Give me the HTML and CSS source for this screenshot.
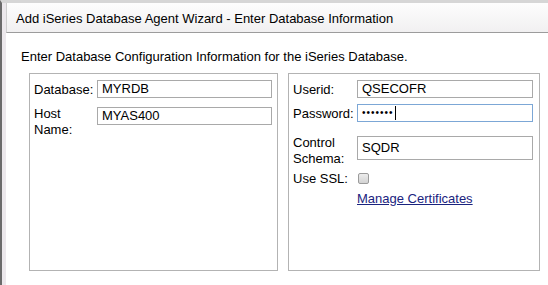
FILE: index.html
```html
<!DOCTYPE html>
<html>
<head>
<meta charset="utf-8">
<title>Add iSeries Database Agent Wizard</title>
<link rel="stylesheet" href="styles.css">
</head>
<body>
<div class="window">
  <div class="titlebar">Add iSeries Database Agent Wizard - Enter Database Information</div>
  <div class="content">
    <p class="intro">Enter Database Configuration Information for the iSeries Database.</p>
    <div class="panels">
      <div class="panel panel-left">
        <div class="row">
          <span class="lbl">Database:</span>
          <div class="field">MYRDB</div>
        </div>
        <div class="row row-gap8">
          <span class="lbl lbl-two">Host<br>Name:</span>
          <div class="field field-offset">MYAS400</div>
        </div>
      </div>
      <div class="panel panel-right">
        <div class="row">
          <span class="lbl lbl-wide">Userid:</span>
          <div class="field">QSECOFR</div>
        </div>
        <div class="row row-gap6">
          <span class="lbl lbl-wide">Password:</span>
          <div class="field field-focus"><span class="dots">•••••••</span><span class="caret"></span></div>
        </div>
        <div class="row row-gap12">
          <span class="lbl lbl-wide lbl-two">Control<br>Schema:</span>
          <div class="field field-tall">SQDR</div>
        </div>
        <div class="row row-ssl">
          <span class="lbl lbl-wide">Use SSL:</span>
          <span class="checkbox"></span>
        </div>
        <div class="row row-link">
          <span class="lbl lbl-wide"></span>
          <a class="link" href="#">Manage Certificates</a>
        </div>
      </div>
    </div>
  </div>
</div>
</body>
</html>
```
FILE: styles.css
```css
html, body {
  margin: 0;
  padding: 0;
  background: #ffffff;
}
body {
  font-family: "Liberation Sans", Arial, sans-serif;
  font-size: 13px;
  color: #000;
}
.window {
  height: 285px;
  box-sizing: border-box;
  border-top: 3px solid #d6d6d6;
  border-left: 2px solid #6b6b6b;
  padding-left: 4px;
  background: #ece8ec;
}
.titlebar {
  height: 29px;
  line-height: 31px;
  padding-left: 9px;
  border-left: 1px solid #cfcfcf;
  border-bottom: 1px solid #9c9c9c;
  background: linear-gradient(#fdfdfd, #f1f0f1);
  white-space: nowrap;
}
.content {
  background: #ffffff;
  height: 252px;
  padding: 16px 0 0 15px;
  box-sizing: border-box;
}
.intro {
  margin: 0;
  line-height: 15px;
}
.panels {
  display: flex;
  gap: 10px;
  margin: 9px 0 0 8px;
}
.panel {
  height: 198px;
  box-sizing: border-box;
  border: 1px solid #b3b3b3;
  padding: 6px 5px 0 4px;
}
.panel-left {
  width: 249px;
}
.panel-right {
  width: 252px;
  padding-right: 6px;
}
.row {
  display: flex;
  align-items: flex-start;
}
.row-gap8 {
  margin-top: 8px;
}
.row-gap6 {
  margin-top: 6px;
}
.row-gap12 {
  margin-top: 13px;
}
.lbl {
  width: 63px;
  flex: none;
  line-height: 15px;
  padding-top: 2px;
}
.lbl-wide {
  width: 64px;
}
.lbl-two {
  line-height: 16px;
  padding-top: 0;
}
.field {
  flex: 1;
  height: 18px;
  box-sizing: border-box;
  border: 1px solid #a9a9a9;
  padding-left: 4px;
  line-height: 16px;
  white-space: nowrap;
  display: flex;
  align-items: center;
}
.field-offset {
  margin-top: 1px;
}
.field-focus {
  border-color: #7ca7d6;
}
.field-tall {
  height: 24px;
  margin-top: 1px;
}
.dots {
  font-size: 10px;
  letter-spacing: 1px;
}
.caret {
  display: inline-block;
  width: 1px;
  height: 14px;
  background: #000;
  margin-left: 1px;
}
.row-ssl {
  margin-top: 4px;
  align-items: center;
}
.row-ssl .lbl {
  padding-top: 0;
}
.checkbox {
  display: inline-block;
  width: 11px;
  height: 11px;
  box-sizing: border-box;
  border: 1px solid #9b9b9b;
  border-radius: 2px;
  background: linear-gradient(#ececec, #d3d3d3);
  margin-left: 1px;
}
.row-link {
  margin-top: 5px;
}
.row-link .lbl {
  padding-top: 0;
}
.link {
  color: #1a237e;
  text-decoration: underline;
  line-height: 15px;
}
```
